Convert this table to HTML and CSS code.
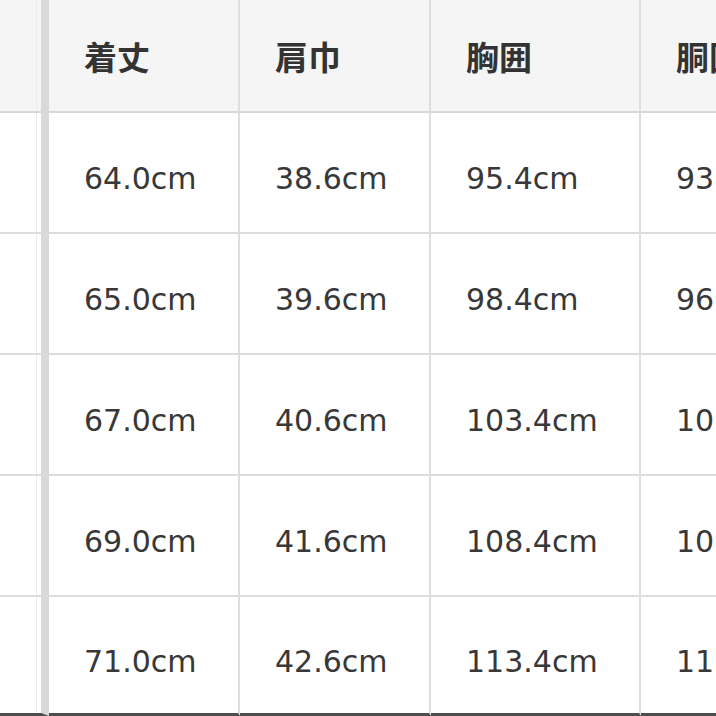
FILE: index.html
```html
<!DOCTYPE html>
<html lang="ja">
<head>
<meta charset="utf-8">
<title>サイズ表</title>
<link rel="stylesheet" href="styles.css">
</head>
<body>
<div class="size-table">
  <div class="cell head lead"></div>
  <div class="cell head">着丈</div>
  <div class="cell head">肩巾</div>
  <div class="cell head">胸囲</div>
  <div class="cell head">胴囲</div>

  <div class="cell lead"></div>
  <div class="cell">64.0cm</div>
  <div class="cell">38.6cm</div>
  <div class="cell">95.4cm</div>
  <div class="cell">93.4cm</div>

  <div class="cell lead"></div>
  <div class="cell">65.0cm</div>
  <div class="cell">39.6cm</div>
  <div class="cell">98.4cm</div>
  <div class="cell">96.4cm</div>

  <div class="cell lead"></div>
  <div class="cell">67.0cm</div>
  <div class="cell">40.6cm</div>
  <div class="cell">103.4cm</div>
  <div class="cell">101.4cm</div>

  <div class="cell lead"></div>
  <div class="cell">69.0cm</div>
  <div class="cell">41.6cm</div>
  <div class="cell">108.4cm</div>
  <div class="cell">106.4cm</div>

  <div class="cell lead last"></div>
  <div class="cell last">71.0cm</div>
  <div class="cell last">42.6cm</div>
  <div class="cell last">113.4cm</div>
  <div class="cell last">111.4cm</div>
</div>
</body>
</html>
```

FILE: styles.css
```css
html, body {
  margin: 0;
  padding: 0;
  width: 716px;
  height: 716px;
  overflow: hidden;
  background: #ffffff;
}

.size-table {
  display: grid;
  grid-template-columns: 49px 191px 191px 210px 191px;
  grid-template-rows: 113px 121px 121px 121px 121px 119px;
  width: 832px;
}

.cell {
  box-sizing: border-box;
  display: flex;
  align-items: center;
  padding-left: 35px;
  padding-top: 12px;
  border-right: 2px solid #dedede;
  border-bottom: 2px solid #dcdcdc;
  font-family: "DejaVu Sans", "Liberation Sans", sans-serif;
  font-size: 30px;
  color: #383838;
  white-space: nowrap;
  overflow: hidden;
}

.head {
  background: #f5f5f5;
  padding-top: 0;
  font-family: "Noto Sans CJK JP", "Noto Sans", sans-serif;
  font-weight: 700;
  font-size: 33px;
  color: #333333;
  border-bottom-color: #d8d8d8;
}

.lead {
  padding-left: 0;
  border-right: 8px solid #d9d9d9;
  background-image: linear-gradient(to right, transparent 36px, #ececec 36px, #ececec 37px, transparent 37px);
}

.last {
  border-bottom: 3px solid #4d4d4d;
}
```
